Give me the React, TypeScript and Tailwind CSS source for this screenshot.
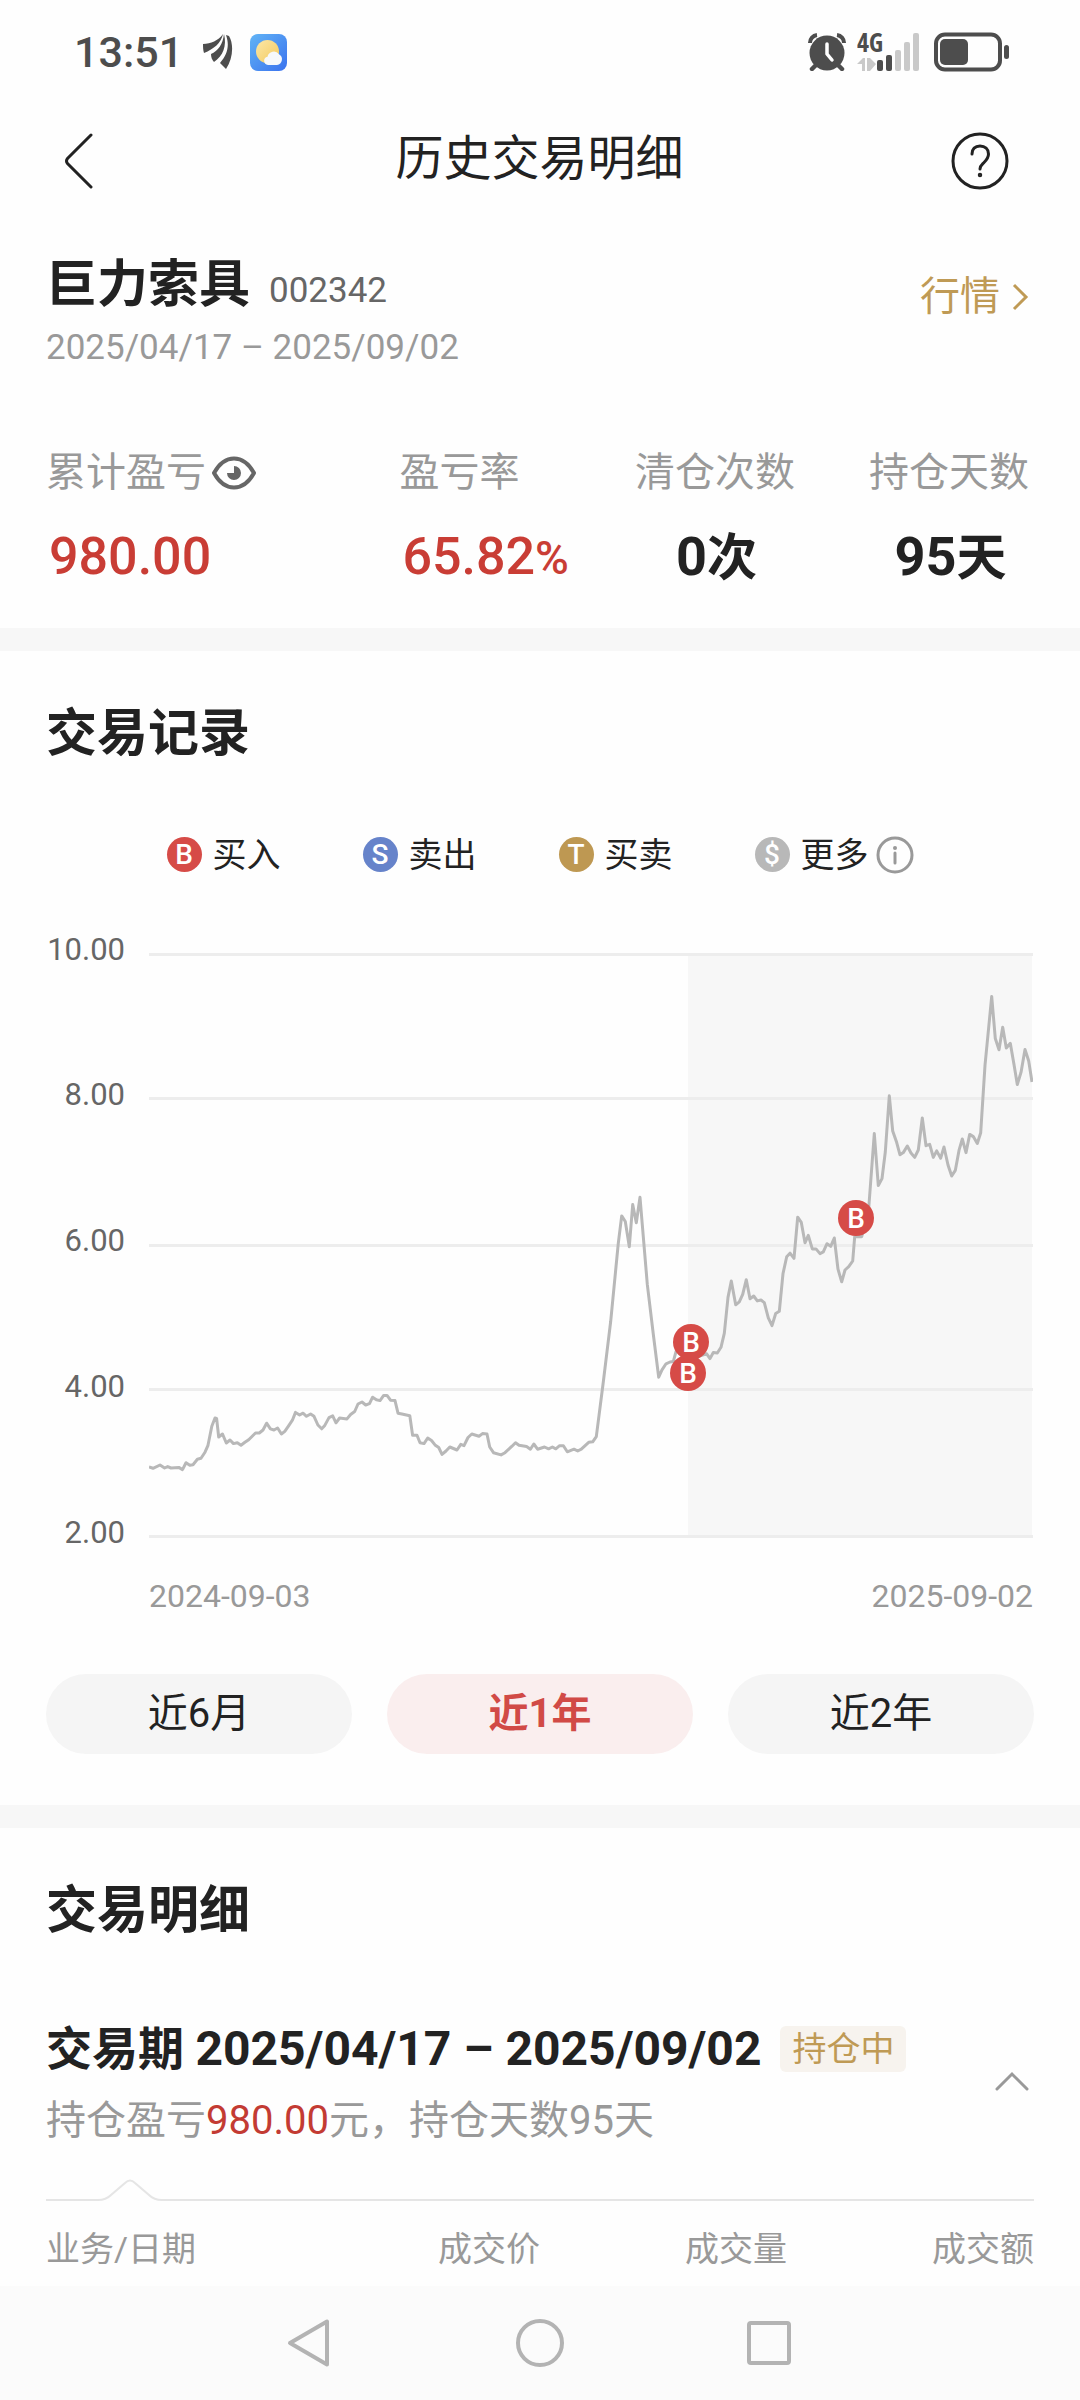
import { useState } from 'react'

const legend = [
  { mark: 'B', label: '买入', color: 'bg-[#d64b47]' },
  { mark: 'S', label: '卖出', color: 'bg-[#6683ca]' },
  { mark: 'T', label: '买卖', color: 'bg-[#be9852]' },
  { mark: '$', label: '更多', color: 'bg-[#b8b8b8]' },
]

const ranges = ['近6月', '近1年', '近2年']

const yTicks = ['10.00', '8.00', '6.00', '4.00', '2.00']

const gridLines = [1, 145, 292, 436, 583]

const buys = [
  { x: 539, y: 420 },
  { x: 542, y: 389 },
  { x: 707, y: 265 },
]

const pricePoints =
  '0,514 4,515.3 11,512 15.6,515 18.7,513.6 22,515 29.8,514.4 33.5,516.6 37,509.7 40.8,512.3 44,511.8 48.4,506.2 52,505.3 56,499.2 59,492.3 ' +
  '62.8,473.2 66,465 67.6,465.4 69.7,484 73.5,481 77.3,490 81,487 84.5,490.6 88.3,489.7 92,492.3 95.9,489.3 99.7,486.7 106.5,480 110.3,480 ' +
  '114,477 117.6,470.2 121.4,475.8 125,477 128.6,475 132.4,481 135.8,478.4 139.6,472.8 143.4,467.2 146.5,459.4 150.6,462 154,460.2 157.5,463.3 ' +
  '161.6,461 165,463.3 168.9,472 172.7,475.8 175.8,472.4 180,464.6 183.7,462.8 187,469.8 190.6,465 198,465.9 201.6,461.5 205.7,458.5 209,451 ' +
  '213,449 216.7,452 220.5,450.7 223.6,444.2 227.4,446.8 231,447.6 234.7,442.4 238,442.4 241.5,447.2 246,447.6 249,460.2 252.9,461 260.8,462.8 ' +
  '263.6,482.3 268,482.3 271,489.7 275,490.6 278.7,485 282.5,487.5 286,491.9 289.7,494.5 293,501.4 297,498 300.8,494 308,497 311.8,491.4 ' +
  '315,492.7 319,484.5 322.8,481 330,483.2 333.5,480.6 338,481 340.7,494 344.5,499.7 352,501.9 356,499.7 363,493.2 366.5,489.7 370,492.3 ' +
  '377.6,493.6 381.4,496.2 384.8,491 388.6,496.2 395.5,494 399.6,495.8 403.4,494 406.8,495.8 410.6,492.7 414.4,492.7 418.3,498.8 425,496.2 ' +
  '428.7,498 432.3,496.2 439.7,489.3 443.7,488.8 447.3,483.6 454.3,429 461.7,368.3 469.3,290.2 472.7,262.9 476.3,268.5 480.3,293.7 ' +
  '483.7,251.6 487.3,269.8 491,244.3 498.3,331.4 504.3,381.3 509.7,424.2 513,416.9 517,410.8 521,409 524.3,408.6 527,398.6 531,394 544,405 ' +
  '557.7,400.8 561,405.6 564.3,399.5 568.3,400 572,394.3 575.3,380.4 579,344.4 582.3,328 586.7,351.8 590.3,348.8 593.7,341.4 597.3,326.7 ' +
  '601,345.7 604.7,343 608.3,347.9 612,347 615.3,349.6 619.3,364.8 623,372.6 626.7,360.5 630.3,358.3 634,320.6 637.7,303.7 641,300.2 ' +
  '645,305.4 648.7,264.2 652.3,269.4 656,289.8 659.3,282.4 663.3,295.9 667,295.9 671,300.6 674.3,298.9 678,290.7 681.7,293.3 685.3,285 ' +
  '689,316.2 692.7,328.8 696,317 699.7,313.6 703.7,308 705.7,283.7 712.7,283.7 719.7,255.5 725.3,180.5 729.3,232.6 733,225.6 736.3,199 ' +
  '740.3,142.8 743.7,178 747.7,189.6 751,201.8 754.3,199.6 758.3,193 762,200 765.7,204.4 769.3,197 773.3,165 777,192.7 780.7,191.4 ' +
  '784.3,204.4 787.7,197.9 791.7,205.2 795,194 799,212 802.7,223 806.3,217.4 810,197.4 813.3,186 817,199.6 820.7,181.4 824.3,183.6 ' +
  '828.3,190.5 831.7,179.7 836,112.4 842.7,43.5 846.3,85.5 850,96.8 853.7,74.3 857.3,95 861.3,90.3 865,111.6 868.3,131.5 872,119.4 876,96.4 ' +
  '879.7,108 883,129'

function StatusBar() {
  return (
    <div className="flex h-[104px] items-center justify-between pr-[70px] pl-[74px] text-[#4d4d4d]">
      <div className="flex items-center">
        <span className="text-[43px] leading-[48px] font-medium">13:51</span>
        <svg className="ml-[20px] h-[36px] w-[30px]" viewBox="0 0 30 36" fill="currentColor">
          <path d="M0 10C8 9.500 15 7 20 0C18 9 11 15 1 19C0 16 0 13 0 10Z" />
          <path d="M21 0C20 10 15 17 8 20C8 23 9 26 11 28C20 22 24 12 21 0Z" />
          <path d="M23 1C27 12 24 21 17 29C19 31 21 33 23 35C30 25 31 10 26 2Z" />
        </svg>
        <svg className="ml-[17px] size-[37px]" viewBox="0 0 37 37">
          <defs>
            <linearGradient id="sky" x1="0" y1="0" x2="1" y2="1">
              <stop offset="0" stopColor="#61b4f6" />
              <stop offset="1" stopColor="#3a72ee" />
            </linearGradient>
            <linearGradient id="sun" x1="0" y1="0" x2="1" y2="1">
              <stop offset="0" stopColor="#fbe7a8" />
              <stop offset="1" stopColor="#f3c95c" />
            </linearGradient>
          </defs>
          <rect width="37" height="37" rx="8" fill="url(#sky)" />
          <circle cx="17.500" cy="17.500" r="11.500" fill="url(#sun)" />
          <path d="M18 31a4.200 4.200 0 0 1-.5-8.300 6.500 6.500 0 0 1 11.500-2.500A5.800 5.800 0 0 1 27 31Z" fill="#f6f8fb" />
        </svg>
      </div>
      <div className="flex items-center">
        <svg className="size-[38px]" viewBox="0 0 38 38" fill="none">
          <path d="M2 10A8 8 0 0 1 9 2M29 2a8 8 0 0 1 7 8" stroke="currentColor" strokeWidth="4" />
          <path d="M8 32l-4 4M30 32l4 4" stroke="currentColor" strokeWidth="4.500" strokeLinecap="round" />
          <circle cx="19" cy="20" r="17.500" fill="currentColor" />
          <path d="M19 11v10l5 6" stroke="#fff" strokeWidth="3.500" strokeLinecap="round" strokeLinejoin="round" />
        </svg>
        <svg className="ml-[11px] h-[60px] w-[64px]" viewBox="0 -10 64 60">
          <text x="0" y="20" fontSize="26" fontWeight="700" fill="currentColor" className="font-['Open_Sans_Condensed','Roboto',sans-serif]">
            4G
          </text>
          <path d="M0 32l6-6h2v13H5v-7ZM10 26h3l6 6-6 7h-3Z" fill="#c9c9c9" />
          <rect x="20" y="28" width="6" height="11" rx="2" fill="currentColor" />
          <rect x="29" y="23" width="6" height="16" rx="2" fill="currentColor" />
          <rect x="38" y="18" width="6" height="21" rx="2" fill="#c9c9c9" />
          <rect x="47" y="10" width="6" height="29" rx="2" fill="#c9c9c9" />
          <rect x="56" y="1" width="6" height="38" rx="2" fill="#c9c9c9" />
        </svg>
        <svg className="ml-[13px] h-[40px] w-[76px]" viewBox="0 0 76 40" fill="none">
          <rect x="2" y="2.500" width="64" height="35" rx="9" stroke="currentColor" strokeWidth="4" />
          <rect x="6" y="7" width="28" height="26" rx="5" fill="currentColor" />
          <rect x="70" y="13" width="5" height="14" rx="2.500" fill="currentColor" />
        </svg>
      </div>
    </div>
  )
}

function Header() {
  return (
    <header className="flex h-[114px] items-center justify-between pr-[71px] pl-[64px]">
      <button aria-label="返回" className="w-[64px]">
        <svg className="h-[56px] w-[30px]" viewBox="0 0 30 56" fill="none" stroke="#222" strokeWidth="3" strokeLinecap="round">
          <path d="M27 2L3.500 25.500Q1.500 28 3.500 30.500L27 54" />
        </svg>
      </button>
      <h1 className="pb-1 text-[48px] leading-[64px]">历史交易明细</h1>
      <button aria-label="帮助">
        <svg className="size-[58px]" viewBox="0 0 58 58" fill="none" stroke="#222" strokeWidth="3" strokeLinecap="round">
          <circle cx="29" cy="29" r="27" />
          <path d="M21 22c0-5 3-8 8-8s8.500 3 8.500 8c0 4-2 6-4.500 8.500S29 34 29 37" />
          <circle cx="29" cy="43" r="1" strokeWidth="2.500" />
        </svg>
      </button>
    </header>
  )
}

function Summary() {
  return (
    <section className="border-b-[23px] border-[#f7f7f7] pt-[35px] pr-[51px] pb-[38px] pl-[46px]">
      <div className="flex items-start justify-between">
        <div>
          <div className="flex items-baseline gap-[19px]">
            <h2 className="text-[51px] leading-[64px] font-bold">巨力索具</h2>
            <span className="text-[35px] text-[#666]">002342</span>
          </div>
          <p className="mt-[6px] text-[35px] leading-[48px] text-[#999]">2025/04/17 – 2025/09/02</p>
        </div>
        <a href="#quote" className="mt-[20px] flex items-center gap-[12px] text-[40px] leading-[48px] text-[#bf9a55]">
          行情
          <svg className="h-[28px] w-[17px]" viewBox="0 0 17 28" fill="none" stroke="currentColor" strokeWidth="3">
            <path d="M2 2l12 12L2 26" />
          </svg>
        </a>
      </div>

      <dl className="mt-[77px] grid grid-cols-[3fr_2fr_auto] text-[40px]">
        <div>
          <dt className="flex items-center gap-[6px] leading-[48px] text-[#999]">
            累计盈亏
            <button aria-label="隐藏金额">
              <svg className="h-[34px] w-[44px]" viewBox="0 0 44 34" fill="none">
                <path
                  d="M2 17C7 8 14 2.500 22 2.500S37 8 42 17C37 26 30 31.500 22 31.500S7 26 2 17Z"
                  stroke="#666"
                  strokeWidth="4"
                  strokeLinejoin="round"
                />
                <path d="M22 10a7 7 0 1 1-7 7h7Z" fill="#666" />
              </svg>
            </button>
          </dt>
          <dd className="mt-[28px] pl-[3px] text-[52px] leading-[64px] font-medium text-[#c93d35]">980.00</dd>
        </div>
        <div>
          <dt className="leading-[48px] text-[#999]">盈亏率</dt>
          <dd className="mt-[28px] pl-[3px] text-[52px] leading-[64px] font-medium text-[#c93d35]">
            65.82<span className="text-[46px]">%</span>
          </dd>
        </div>
        <div className="flex gap-[74px] text-center">
          <div>
            <dt className="leading-[48px] text-[#999]">清仓次数</dt>
            <dd className="mt-[28px] pl-[3px] text-[50px] leading-[64px] font-bold">
              <span className="text-[54px]">0</span>次
            </dd>
          </div>
          <div>
            <dt className="leading-[48px] text-[#999]">持仓天数</dt>
            <dd className="mt-[28px] pl-[3px] text-[50px] leading-[64px] font-bold">
              <span className="text-[54px]">95</span>天
            </dd>
          </div>
        </div>
      </dl>
    </section>
  )
}

function PriceChart() {
  return (
    <div className="pr-[47px] pl-[46px]">
      <div className="flex gap-[24px]">
        <div className="flex w-[79px] flex-col justify-between text-right text-[31px] leading-[32px] text-[#666]">
          {yTicks.map((tick) => (
            <span key={tick}>{tick}</span>
          ))}
        </div>
        <div className="flex-1 pt-[19px] pb-[11px]">
          <svg className="block h-auto w-full" viewBox="0 0 884 585" fill="none">
            <rect x="539" y="1" width="344" height="582" fill="#f7f7f7" />
            {gridLines.map((y) => (
              <path key={y} d={`M0 ${y + 0.5}H884`} stroke="#ededed" strokeWidth="3" />
            ))}
            <polyline points={pricePoints} stroke="#b8b8b8" strokeWidth="3" strokeLinejoin="round" />
            {buys.map((buy) => (
              <g key={buy.x}>
                <circle cx={buy.x} cy={buy.y} r="18" fill="#d64b47" />
                <text x={buy.x} y={buy.y + 10} textAnchor="middle" fontSize="28" fontWeight="500" fill="#fff">
                  B
                </text>
              </g>
            ))}
          </svg>
        </div>
      </div>
      <div className="mt-[31px] flex justify-between pl-[103px] text-[32px] leading-[32px] text-[#999]">
        <span>2024-09-03</span>
        <span>2025-09-02</span>
      </div>
    </div>
  )
}

function Records() {
  const [range, setRange] = useState('近1年')

  return (
    <section className="border-b-[23px] border-[#f7f7f7] pb-[51px]">
      <h2 className="px-[46px] pt-[51px] text-[51px] leading-[64px] font-bold">交易记录</h2>

      <div className="mt-[65px] flex items-center justify-center gap-[82px]">
        {legend.map((item) => (
          <div key={item.mark} className="flex items-center text-[34px] leading-[48px]">
            <span
              className={`flex size-[35px] items-center justify-center rounded-full text-[28px] leading-[35px] font-medium text-white ${item.color}`}
            >
              {item.mark}
            </span>
            <span className="ml-[11px]">{item.label}</span>
            {item.mark === '$' && (
              <button aria-label="说明" className="ml-[7px]">
                <svg className="size-[38px]" viewBox="0 0 38 38" fill="none" stroke="#999" strokeWidth="3">
                  <circle cx="19" cy="19" r="17" />
                  <path d="M19 17v10" strokeLinecap="round" />
                  <circle cx="19" cy="12" r="2" fill="#999" stroke="none" />
                </svg>
              </button>
            )}
          </div>
        ))}
      </div>

      <div className="mt-[55px]">
        <PriceChart />
      </div>

      <div className="mt-[62px] grid grid-cols-3 gap-[35px] px-[46px]">
        {ranges.map((name) => (
          <button
            key={name}
            onClick={() => setRange(name)}
            className={`h-[80px] rounded-full text-[40px] leading-[48px] ${
              name === range ? 'bg-[#faeeee] font-bold text-[#d14a46]' : 'bg-[#f5f5f5]'
            }`}
          >
            {name}
          </button>
        ))}
      </div>
    </section>
  )
}

function Details() {
  return (
    <section className="px-[46px] pt-[51px]">
      <h2 className="text-[51px] leading-[64px] font-bold">交易明细</h2>

      <div className="mt-[74px] flex items-center justify-between pr-[5px]">
        <div>
          <div className="flex items-center gap-[19px]">
            <h3 className="text-[46px] leading-[64px] font-bold">
              交易期 <span className="text-[48px]">2025/04/17 – 2025/09/02</span>
            </h3>
            <span className="rounded-[6px] bg-[#f7f3ee] px-[12px] text-[34px] leading-[46px] text-[#bf9a55]">持仓中</span>
          </div>
          <p className="mt-[16px] text-[40px] leading-[48px] text-[#999]">
            持仓盈亏<span className="text-[#c33b33]">980.00</span>元，持仓天数95天
          </p>
        </div>
        <button aria-label="收起">
          <svg className="h-[20px] w-[34px]" viewBox="0 0 34 20" fill="none" stroke="#999" strokeWidth="3" strokeLinecap="round">
            <path d="M2 18L17 3l15 15" />
          </svg>
        </button>
      </div>

      <div className="mt-[32px] flex items-end">
        <svg className="h-[24px] w-[120px]" viewBox="0 0 120 24" fill="none" stroke="#e5e5e5" strokeWidth="2">
          <path d="M0 23H52Q60 23 65 18L79 6Q84 1 89 6L103 18Q108 23 116 23H120" />
        </svg>
        <div className="h-[2px] flex-1 bg-[#e5e5e5]" />
      </div>

      <table className="mt-[24px] w-full table-fixed text-[34px] leading-[48px] text-[#999]">
        <thead>
          <tr>
            <th className="text-left font-normal">业务/日期</th>
            <th className="text-right font-normal">成交价</th>
            <th className="text-right font-normal">成交量</th>
            <th className="text-right font-normal">成交额</th>
          </tr>
        </thead>
      </table>
    </section>
  )
}

function SystemNav() {
  return (
    <nav className="mt-auto flex h-[114px] items-center justify-center gap-[180px] bg-[#fbfbfb]">
      <button aria-label="Back">
        <svg className="size-[50px]" viewBox="0 0 50 50" fill="none" stroke="#b3b3b3" strokeWidth="4" strokeLinejoin="round">
          <path d="M42 3.500V46.500L5 25Z" />
        </svg>
      </button>
      <button aria-label="Home">
        <svg className="size-[50px]" viewBox="0 0 50 50" fill="none" stroke="#b3b3b3" strokeWidth="4">
          <circle cx="25" cy="25" r="22" />
        </svg>
      </button>
      <button aria-label="Recent">
        <svg className="size-[50px]" viewBox="0 0 50 50" fill="none" stroke="#b3b3b3" strokeWidth="4">
          <rect x="4" y="5" width="40" height="40" rx="2" />
        </svg>
      </button>
    </nav>
  )
}

export default function App() {
  return (
    <div className="flex min-h-screen flex-col bg-[#fefefe] font-['Roboto','Noto_Sans_CJK_SC',sans-serif] text-[#222]">
      <StatusBar />
      <Header />
      <Summary />
      <Records />
      <Details />
      <SystemNav />
    </div>
  )
}
